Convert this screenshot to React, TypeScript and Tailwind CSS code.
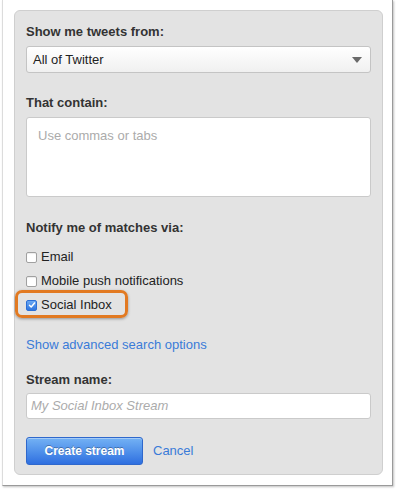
import React from "react";

function Checkbox({ checked }: { checked?: boolean }) {
  if (checked) {
    return (
      <div className="w-[11px] h-[11px] rounded-[2px] border border-[#2c6fd6] bg-gradient-to-b from-[#6aa8f2] to-[#2f76e0] flex items-center justify-center shrink-0">
        <svg viewBox="0 0 10 10" className="w-[8px] h-[8px]">
          <path d="M1.8 5.2 L4 7.4 L8.2 2.4" fill="none" stroke="#fff" strokeWidth={1.8} strokeLinecap="round" strokeLinejoin="round" />
        </svg>
      </div>
    );
  }
  return <div className="w-[11px] h-[11px] rounded-[2px] border border-[#a0a0a0] bg-white shadow-[inset_0_1px_1px_rgba(0,0,0,0.08)] shrink-0" />;
}

function Option({ label, checked, highlight }: { label: string; checked?: boolean; highlight?: boolean }) {
  return (
    <div className="relative flex items-center gap-[4px] h-[16px] leading-[16px]">
      {highlight && (
        <div className="absolute left-[-11px] top-[-7px] w-[113px] h-[28px] rounded-[7px] border-[3px] border-[#e27a22] shadow-[0_1px_3px_rgba(0,0,0,0.35)]" />
      )}
      <Checkbox checked={checked} />
      <span className="text-[13px] text-[#222]">{label}</span>
    </div>
  );
}

export default function App() {
  return (
    <div className="w-[396px] h-[489px] bg-white font-['Liberation_Sans',Arial,sans-serif]">
      <div className="ml-[2px] w-[391px] h-[486px] bg-white border-l border-l-[#dcdcdc] border-r border-r-[#9a9a9a] border-b border-b-[#9a9a9a] shadow-[1px_1px_2px_rgba(0,0,0,0.25)] pt-[10px] pl-[11px]">
        <div className="w-[369px] h-[465px] rounded-[6px] bg-[#e3e3e3] border border-[#cfcfcf] px-[11px] pt-[13px] flex flex-col">
          <label className="text-[13px] leading-[16px] font-bold text-[#333]">Show me tweets from:</label>
          <div className="mt-[6px] h-[27px] rounded-[3px] border border-[#c4c4c4] bg-gradient-to-b from-white to-[#f0f0f0] flex items-center justify-between pl-[6px] pr-[8px]">
            <span className="text-[13px] text-[#222]">All of Twitter</span>
            <svg viewBox="0 0 10 6" className="w-[10px] h-[6px]">
              <path d="M0 0 L10 0 L5 6 Z" fill="#6a6a6a" />
            </svg>
          </div>

          <label className="mt-[22px] text-[13px] leading-[16px] font-bold text-[#333]">That contain:</label>
          <div className="mt-[6px] h-[80px] rounded-[3px] border border-[#cacaca] bg-white pl-[11px] pt-[9px] leading-[16px]">
            <span className="text-[13px] leading-[16px] text-[#ababab]">Use commas or tabs</span>
          </div>

          <label className="mt-[23px] text-[13px] leading-[16px] font-bold text-[#333]">Notify me of matches via:</label>
          <div className="mt-[13px] flex flex-col gap-[8px]">
            <Option label="Email" />
            <Option label="Mobile push notifications" />
            <Option label="Social Inbox" checked highlight />
          </div>

          <a className="mt-[24px] text-[13px] leading-[16px] text-[#3a7bd8] cursor-pointer">Show advanced search options</a>

          <label className="mt-[19px] text-[13px] leading-[16px] font-bold text-[#333]">Stream name:</label>
          <div className="mt-[5px] h-[26px] rounded-[3px] border border-[#cacaca] bg-white pl-[4px] flex items-center">
            <span className="text-[13px] italic text-[#ababab]">My Social Inbox Stream</span>
          </div>

          <div className="mt-[18px] flex items-center gap-[10px]">
            <button className="w-[117px] h-[28px] rounded-[3px] border border-[#2f68cc] bg-gradient-to-b from-[#74b2f4] to-[#2f6fe0] text-white text-[12px] font-bold [text-shadow:0_-1px_0_rgba(0,0,0,0.3)] shadow-[inset_0_1px_0_rgba(255,255,255,0.35)]">
              Create stream
            </button>
            <a className="text-[13px] text-[#3a7bd8] cursor-pointer">Cancel</a>
          </div>
        </div>
      </div>
    </div>
  );
}
